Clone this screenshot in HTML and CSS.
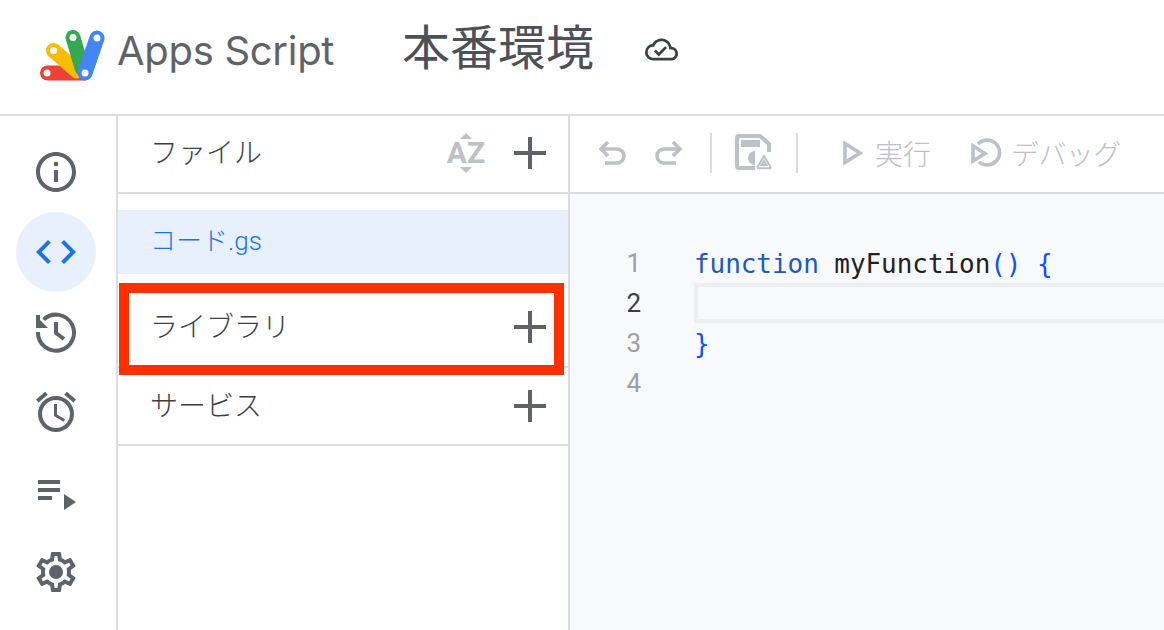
FILE: index.html
```html
<!DOCTYPE html>
<html lang="ja">
<head>
<meta charset="utf-8">
<title>Apps Script</title>
<link rel="stylesheet" href="styles.css">
</head>
<body>
<div class="app">
  <header class="header">
    <svg class="logo" width="72" height="52" viewBox="0 0 72 52">
      <path class="logo-red" d="M7.500 35.500H36l10 15H7.500a7.500 7.500 0 0 1 0-15z"/>
      <line class="logo-yellow" x1="13.500" y1="20.500" x2="37" y2="41"/>
      <line class="logo-green" x1="33" y1="7.500" x2="42" y2="38"/>
      <line class="logo-blue" x1="57" y1="8" x2="45" y2="43"/>
      <circle class="logo-dot" cx="7" cy="43" r="3.500"/>
      <circle class="logo-dot" cx="13.500" cy="20.500" r="3.500"/>
      <circle class="logo-dot" cx="33" cy="7.500" r="3.500"/>
      <circle class="logo-dot" cx="57" cy="8" r="3.500"/>
      <circle class="logo-dot" cx="45" cy="43" r="3.500"/>
    </svg>
    <span class="brand">Apps Script</span>
    <span class="project">本番環境</span>
    <svg class="cloud" width="33" height="33" viewBox="0 0 24 24">
      <path d="M19.350 10.040A7.490 7.490 0 0 0 12 4C9.110 4 6.600 5.640 5.350 8.040A5.994 5.994 0 0 0 0 14c0 3.310 2.690 6 6 6h13c2.760 0 5-2.240 5-5 0-2.640-2.050-4.780-4.650-4.960zM19 18H6c-2.210 0-4-1.790-4-4 0-2.050 1.530-3.760 3.560-3.970l1.070-.11.500-.95A5.469 5.469 0 0 1 12 6c2.620 0 4.880 1.860 5.390 4.430l.3 1.500 1.530.11A2.980 2.980 0 0 1 22 15c0 1.650-1.350 3-3 3zm-9-3.820l-2.090-2.090L6.500 13.500 10 17l6.010-6.010-1.410-1.410z"/>
    </svg>
  </header>
  <div class="main">
    <nav class="rail">
      <div class="rail-item"><svg width="48" height="48" viewBox="0 0 24 24"><path d="M11 7h2v2h-2zm0 4h2v6h-2zm1-9C6.480 2 2 6.480 2 12s4.480 10 10 10 10-4.480 10-10S17.520 2 12 2zm0 18c-4.410 0-8-3.590-8-8s3.590-8 8-8 8 3.590 8 8-3.590 8-8 8z"/></svg></div>
      <div class="rail-item active"><svg width="48" height="48" viewBox="0 0 24 24"><path d="M9.400 16.600L4.800 12l4.600-4.600L8 6l-6 6 6 6 1.400-1.400zm5.200 0l4.600-4.600-4.600-4.600L16 6l6 6-6 6-1.400-1.400z"/></svg></div>
      <div class="rail-item"><svg width="48" height="48" viewBox="0 0 24 24"><path class="stroke" d="M5.800 5.800A9 9 0 1 1 3 12"/><path class="stroke" d="M12 7v5.500l4 3"/><path d="M2 4l6 6H2z"/><path d="M2 3.500h2v6.500H2z"/></svg></div>
      <div class="rail-item"><svg width="48" height="48" viewBox="0 0 24 24"><path d="M22 5.720l-4.600-3.860-1.290 1.530 4.600 3.860L22 5.720zM7.880 3.390L6.600 1.860 2 5.710l1.290 1.530 4.590-3.850zM12.500 8H11v6l4.750 2.850.75-1.230-4-2.370V8zM12 4c-4.970 0-9 4.030-9 9s4.020 9 9 9c4.970 0 9-4.030 9-9s-4.030-9-9-9zm0 16c-3.870 0-7-3.130-7-7s3.130-7 7-7 7 3.130 7 7-3.130 7-7 7z"/></svg></div>
      <div class="rail-item"><svg width="48" height="48" viewBox="0 0 24 24"><path d="M3 6h11v2H3zm0 4h11v2H3zm0 4h7v2H3zm13-1l6 4-6 4z"/></svg></div>
      <div class="rail-item"><svg width="48" height="48" viewBox="0 0 24 24"><path d="M19.430 12.980c.04-.32.07-.64.07-.98 0-.34-.03-.66-.07-.98l2.110-1.650c.19-.15.24-.42.12-.64l-2-3.460c-.09-.16-.26-.25-.44-.25-.06 0-.12.01-.17.03l-2.490 1c-.52-.4-1.080-.73-1.690-.98l-.38-2.650C14.460 2.180 14.250 2 14 2h-4c-.25 0-.46.18-.49.42l-.38 2.650c-.61.25-1.170.59-1.690.98l-2.490-1c-.06-.02-.12-.03-.18-.03-.17 0-.34.09-.43.25l-2 3.460c-.13.22-.07.49.12.64l2.110 1.650c-.04.32-.07.65-.07.98 0 .33.03.66.07.98l-2.110 1.650c-.19.15-.24.42-.12.64l2 3.460c.09.16.26.25.44.25.06 0 .12-.01.17-.03l2.490-1c.52.4 1.080.73 1.690.98l.38 2.650c.03.24.24.42.49.42h4c.25 0 .46-.18.49-.42l.38-2.650c.61-.25 1.170-.59 1.690-.98l2.490 1c.06.02.12.03.18.03.17 0 .34-.09.43-.25l2-3.460c.12-.22.07-.49-.12-.64l-2.110-1.650zm-1.980-1.710c.04.31.05.52.05.73 0 .21-.02.43-.05.73l-.14 1.130.89.7 1.080.84-.7 1.210-1.270-.51-1.040-.42-.9.68c-.43.32-.84.56-1.250.73l-1.060.43-.16 1.130-.2 1.350h-1.400l-.19-1.350-.16-1.130-1.060-.43c-.43-.18-.83-.41-1.230-.71l-.91-.7-1.060.43-1.270.51-.7-1.210 1.080-.84.89-.7-.14-1.130c-.03-.31-.05-.54-.05-.74s.02-.43.05-.73l.14-1.130-.89-.7-1.080-.84.7-1.210 1.270.51 1.040.42.9-.68c.43-.32.84-.56 1.250-.73l1.060-.43.16-1.130.2-1.350h1.390l.19 1.350.16 1.130 1.060.43c.43.18.83.41 1.230.71l.91.7 1.060-.43 1.270-.51.7 1.210-1.070.85-.89.7.14 1.130z"/><circle cx="12" cy="12" r="3.500"/></svg></div>
    </nav>
    <aside class="sidebar">
      <div class="side-head">
        <span class="side-label">ファイル</span>
        <span class="sort">
          <svg class="tri" width="16" height="6" viewBox="0 0 16 6"><path d="M8 0l6 6H2z"/></svg>
          <span class="sort-text">AZ</span>
          <svg class="tri" width="16" height="6" viewBox="0 0 16 6"><path d="M2 0h12L8 6z"/></svg>
        </span>
        <svg class="plus" width="32" height="32" viewBox="0 0 32 32"><path d="M14 0h4v14h14v4H18v14h-4V18H0v-4h14z"/></svg>
      </div>
      <div class="files">
        <div class="file">コード.gs</div>
      </div>
      <div class="section lib">
        <span class="side-label">ライブラリ</span>
        <svg class="plus" width="32" height="32" viewBox="0 0 32 32"><path d="M14 0h4v14h14v4H18v14h-4V18H0v-4h14z"/></svg>
        <div class="callout"></div>
      </div>
      <div class="section svc">
        <span class="side-label">サービス</span>
        <svg class="plus" width="32" height="32" viewBox="0 0 32 32"><path d="M14 0h4v14h14v4H18v14h-4V18H0v-4h14z"/></svg>
      </div>
    </aside>
    <section class="workspace">
      <div class="toolbar">
        <svg class="tool undo" width="28" height="26" viewBox="0 0 28 26"><path class="tstroke" d="M10 2L3 9l7 7"/><path class="tstroke" d="M3 9h16a7 7 0 0 1 0 14H7"/></svg>
        <svg class="tool redo" width="28" height="26" viewBox="0 0 28 26"><path class="tstroke" d="M18 2l7 7-7 7"/><path class="tstroke" d="M25 9H9a7 7 0 0 0 0 14h12"/></svg>
        <span class="divider first"></span>
        <svg class="tool save" width="38" height="38" viewBox="0 0 38 38"><path class="save-line" d="M20 34H4a2 2 0 0 1-2-2V4a2 2 0 0 1 2-2h21l9 8v8"/><path class="save-solid" d="M6 6h19v7H6z"/><path class="save-solid" d="M20 17a7 7 0 1 0 0 14z"/><path class="save-tri" d="M29 22l6.500 11a.8.8 0 0 1-.7 1.200H23.200a.8.8 0 0 1-.7-1.200z"/><path class="save-tri thin" d="M29 27l2.500 4h-5z"/></svg>
        <span class="divider"></span>
        <svg class="tool run" width="20" height="24" viewBox="0 0 20 24"><path class="tstroke" d="M2 2.500L17 12 2 21.500z"/></svg>
        <span class="tool-label run-label">実行</span>
        <svg class="tool debug" width="32" height="30" viewBox="0 0 32 30"><path class="tstroke" d="M7 6A12.500 12.500 0 1 1 8 24"/><path class="tstroke" d="M2 8l12 7.500L2 23z"/></svg>
        <span class="tool-label debug-label">デバッグ</span>
        <span class="tool-label clip">関数</span>
      </div>
      <div class="editor">
        <div class="line"><span class="num">1</span><span class="code"><span class="kw">function</span> myFunction<span class="br">()</span> <span class="br">{</span></span></div>
        <div class="line current"><span class="num">2</span><span class="code"></span></div>
        <div class="line"><span class="num">3</span><span class="code"><span class="br">}</span></span></div>
        <div class="line"><span class="num">4</span><span class="code"></span></div>
      </div>
    </section>
  </div>
</div>
</body>
</html>
```
FILE: styles.css
```css
* { box-sizing: border-box; }
html, body { margin: 0; height: 100%; overflow: hidden; background: #fff; }
body { font-family: "Roboto", "Noto Sans CJK JP", sans-serif; color: #3c4043; }
.app { display: flex; flex-direction: column; height: 630px; }

.header { display: flex; align-items: center; height: 116px; flex: none; border-bottom: 2px solid #dadce0; padding-left: 40px; }
.logo { flex: none; margin-top: -2px; }
.logo-red { fill: #ea4335; }
.logo-yellow, .logo-green, .logo-blue { stroke-width: 15px; stroke-linecap: round; fill: none; }
.logo-yellow { stroke: #fbbc04; }
.logo-green { stroke: #34a853; }
.logo-blue { stroke: #4285f4; }
.logo-dot { fill: #fff; }
.brand { font-family: "Inter", "Roboto", sans-serif; font-size: 40px; line-height: 48px; color: #5f6368; margin-left: 5px; margin-top: -12px; letter-spacing: -0.3px; width: 287px; flex: none; }
.project { font-family: "Noto Sans CJK JP", sans-serif; font-size: 48px; font-weight: 400; color: #4d5156; line-height: 60px; margin-top: -26px; margin-left: -2px; }
.cloud { fill: #3c4043; margin-left: 51px; margin-top: -15px; flex: none; }

.main { display: flex; flex: 1; min-height: 0; }
.rail { width: 118px; flex: none; border-right: 2px solid #dadce0; padding: 16px 0 0 16px; display: flex; flex-direction: column; }
.rail-item { width: 80px; height: 80px; flex: none; border-radius: 50%; display: flex; align-items: center; justify-content: center; }
.rail-item svg { fill: #5f6368; }
.rail-item .stroke { fill: none; stroke: #5f6368; stroke-width: 2px; }
.rail-item.active { background: #e8f0fe; }
.rail-item.active svg { fill: #1a73e8; }

.sidebar { width: 452px; flex: none; border-right: 2px solid #dadce0; display: flex; flex-direction: column; }
.side-head { display: flex; align-items: center; height: 78px; flex: none; border-bottom: 2px solid #dadce0; padding: 0 22px 2px 32px; }
.side-label { font-family: "Noto Sans CJK JP", sans-serif; font-size: 28px; font-weight: 300; line-height: 40px; color: #3c4043; flex: 1; margin-top: -4px; }
.sort { display: flex; flex-direction: column; align-items: center; gap: 0; margin-right: 28px; width: 40px; }
.sort-text { font-family: "Roboto", sans-serif; font-weight: 700; font-size: 30px; line-height: 28px; color: #bdc1c6; }
.tri { fill: #bdc1c6; display: block; }
.plus { fill: #5f6368; flex: none; }

.files { padding: 16px 0 14px; flex: none; }
.file { height: 64px; background: #e8f0fe; color: #1a73e8; font-size: 26px; font-weight: 300; line-height: 62px; padding-left: 32px; font-family: "Roboto", "Noto Sans CJK JP", sans-serif; }
.section { display: flex; align-items: center; flex: none; padding: 0 22px 0 32px; border-bottom: 2px solid #dadce0; position: relative; }
.section.lib { height: 80px; }
.section.svc { height: 78px; padding-bottom: 0; }
.callout { position: absolute; left: 1px; top: -5px; width: 445px; height: 92px; border: 10px solid #ff3000; }

.workspace { flex: 1; min-width: 0; display: flex; flex-direction: column; background: #f8f9fb; }
.toolbar { height: 78px; flex: none; background: #fff; border-bottom: 2px solid #dadce0; display: flex; align-items: center; padding: 0 0 2px 28px; overflow: hidden; white-space: nowrap; }
.tool { flex: none; fill: #bdc1c6; }
.tstroke { fill: none; stroke: #bdc1c6; stroke-width: 3.600px; }
.redo { margin-left: 29px; }
.divider { width: 2px; height: 40px; background: #dadce0; flex: none; margin: 0 23px 0 22px; }
.divider.first { margin-left: 27px; }
.save .save-line { fill: none; stroke: #bdc1c6; stroke-width: 4px; }
.save .save-solid { fill: #bdc1c6; }
.save .save-tri { fill: none; stroke: #bdc1c6; stroke-width: 2px; }
.save + .divider { margin-left: 23px; margin-right: 45px; }
.tool-label { font-family: "Noto Sans CJK JP", sans-serif; font-size: 28px; font-weight: 300; color: #bdc1c6; flex: none; }
.run-label { margin-left: 12px; }
.debug { margin-left: 40px; }
.debug-label { margin-left: 8px; letter-spacing: -0.6px; }
.clip { margin-left: 42px; }

.editor { flex: 1; padding-top: 49px; font-family: "DejaVu Sans Mono", monospace; font-size: 26px; color: #202124; }
.line { display: flex; height: 40px; line-height: 40px; }
.num { width: 71px; text-align: right; color: #9aa0a6; font-family: "Roboto", sans-serif; flex: none; }
.code { flex: 1; margin-left: 53px; white-space: pre; letter-spacing: -0.06px; padding-top: 1px; }
.current .num { color: #3c4043; }
.current .code { border: 4px solid #eeeeee; border-right: 0; padding: 0; }
.kw { color: #1a5bbf; }
.br { color: #0f4fff; }
```
